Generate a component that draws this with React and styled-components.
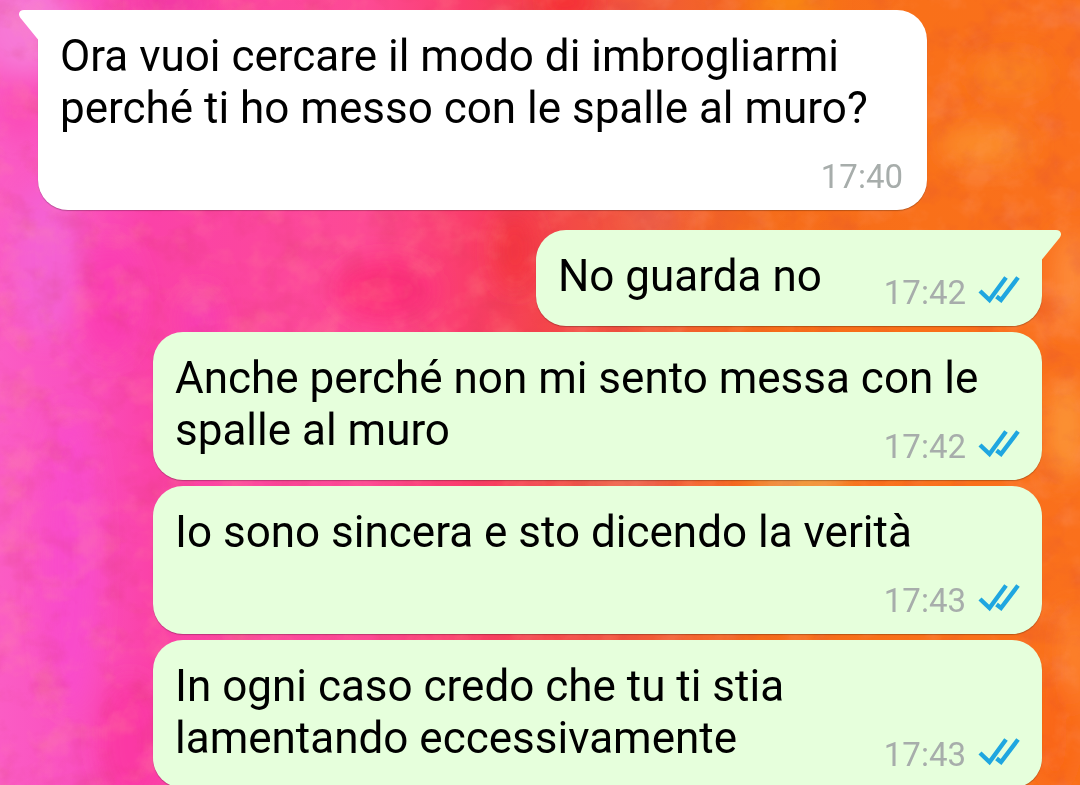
import React from 'react'
import styled, { createGlobalStyle } from 'styled-components';

const messages = [
    { id: 1, text: 'Ora vuoi cercare il modo di imbrogliarmi perché ti ho messo con le spalle al muro?', time: '17:40', tail: true },
    { id: 2, text: 'No guarda no', time: '17:42', mine: true, tail: true },
    { id: 3, text: 'Anche perché non mi sento messa con le spalle al muro', time: '17:42', mine: true },
    { id: 4, text: 'Io sono sincera e sto dicendo la verità', time: '17:43', mine: true },
    { id: 5, text: 'In ogni caso credo che tu ti stia lamentando eccessivamente', time: '17:43', mine: true },
]

const Background = () => (
    <Wallpaper viewBox="0 0 1080 785" preserveAspectRatio="none" aria-hidden="true">
        <defs>
            <linearGradient id="base" x1="0" y1="0" x2="1" y2="0">
                <stop offset="0" stopColor="#fb5cc4" />
                <stop offset="0.07" stopColor="#fa50c0" />
                <stop offset="0.14" stopColor="#fb42a8" />
                <stop offset="0.34" stopColor="#fd4a94" />
                <stop offset="0.43" stopColor="#fa3d6c" />
                <stop offset="0.5" stopColor="#f4444c" />
                <stop offset="0.6" stopColor="#f15a38" />
                <stop offset="0.7" stopColor="#f56c1a" />
                <stop offset="0.85" stopColor="#f97019" />
                <stop offset="1" stopColor="#fa701c" />
            </linearGradient>
            <filter id="blur" x="-50%" y="-50%" width="200%" height="200%">
                <feGaussianBlur stdDeviation="12" />
            </filter>
            <filter id="dark" x="0" y="0" width="100%" height="100%" colorInterpolationFilters="sRGB">
                <feTurbulence type="fractalNoise" baseFrequency="0.03 0.034" numOctaves="4" seed="4" />
                <feColorMatrix values="0 0 0 0 0.8  0 0 0 0 0.2  0 0 0 0 0.3  3 0 0 0 -1.45" />
            </filter>
            <filter id="light" x="0" y="0" width="100%" height="100%" colorInterpolationFilters="sRGB">
                <feTurbulence type="fractalNoise" baseFrequency="0.028 0.032" numOctaves="4" seed="11" />
                <feColorMatrix values="0 0 0 0 1  0 0 0 0 0.66  0 0 0 0 0.56  0 3 0 0 -1.45" />
            </filter>
        </defs>
        <rect width="1080" height="785" fill="url(#base)" />
        <g filter="url(#blur)">
            <ellipse cx="25" cy="25" rx="45" ry="50" fill="#f778d6" />
            <ellipse cx="20" cy="110" rx="24" ry="30" fill="#fb4cb8" />
            <ellipse cx="170" cy="2" rx="36" ry="12" fill="#ee35a4" />
            <ellipse cx="45" cy="260" rx="34" ry="80" fill="#f560d2" />
            <ellipse cx="110" cy="300" rx="30" ry="60" fill="#fb3cb2" />
            <ellipse cx="200" cy="320" rx="18" ry="30" fill="#f83cb4" />
            <ellipse cx="385" cy="290" rx="50" ry="30" fill="#fd2f7c" />
            <ellipse cx="515" cy="250" rx="20" ry="40" fill="#f4343f" />
            <ellipse cx="565" cy="2" rx="30" ry="16" fill="#f62c30" />
            <ellipse cx="790" cy="2" rx="40" ry="14" fill="#f98c18" />
            <ellipse cx="650" cy="220" rx="30" ry="8" fill="#ef6a58" />
            <ellipse cx="70" cy="560" rx="28" ry="150" fill="#f94bcb" />
            <ellipse cx="130" cy="740" rx="30" ry="60" fill="#fb38a4" />
            <ellipse cx="620" cy="483" rx="60" ry="12" fill="#ea6450" />
            <ellipse cx="800" cy="483" rx="50" ry="14" fill="#efa545" />
            <ellipse cx="985" cy="145" rx="46" ry="20" fill="#fb8c2a" />
            <ellipse cx="1010" cy="75" rx="40" ry="20" fill="#fa8222" />
            <ellipse cx="1072" cy="280" rx="18" ry="50" fill="#fd8b3a" />
            <ellipse cx="1066" cy="430" rx="20" ry="50" fill="#fb9336" />
            <ellipse cx="1074" cy="660" rx="12" ry="50" fill="#fd8530" />
            <ellipse cx="1055" cy="730" rx="20" ry="60" fill="#fa6614" />
        </g>
        <rect width="1080" height="785" filter="url(#dark)" opacity="0.14" />
        <rect width="1080" height="785" filter="url(#light)" opacity="0.18" />
    </Wallpaper>
)

const Tail = ({ mine }) => (
    <TailShape $mine={mine} viewBox="0 0 20 32" aria-hidden="true">
        <path d="M20 0H5C0 0 -1.500 4.500 1.500 8L19 29.500H20Z" fill="currentColor" />
    </TailShape>
)

const ReadTicks = () => (
    <Ticks viewBox="0 0 42 28" role="img" aria-label="Letto">
        <path d="M2 15L11.500 24L28 1.500" />
        <path d="M18.500 20.500L23 24L40 1.500" />
    </Ticks>
)

const Message = ({ text, time, mine, tail }) => (
    <Bubble $mine={mine} $tail={tail}>
        {tail && <Tail mine={mine} />}
        <Text>{text}</Text>
        <Meta>
            <time>{time}</time>
            {mine && <ReadTicks />}
        </Meta>
    </Bubble>
)

const App = () => {
    return (
        <>
            <GlobalStyle />
            <Background />
            <Chat>
                {messages.map(({ id, ...message }) => (
                    <Message key={id} {...message} />
                ))}
            </Chat>
        </>
    )
}

export default App;

const GlobalStyle = createGlobalStyle`
    body {
        margin: 0;
        background: #fb4a80;
        overflow: hidden;
    }
`

const Wallpaper = styled.svg`
    position: fixed;
    inset: 0;
    width: 100%;
    height: 100%;
`

const Chat = styled.main`
    position: relative;
    display: flex;
    flex-direction: column;
    gap: 6px;
    padding: 10px 38px;
    font-family: Roboto, sans-serif;
`

const Bubble = styled.article`
    position: relative;
    display: flow-root;
    box-sizing: border-box;
    max-width: calc(100% - 115px);
    align-self: ${({ $mine }) => ($mine ? 'flex-end' : 'flex-start')};
    margin-top: ${({ $mine, $tail }) => ($mine && $tail ? '14px' : '0')};
    padding: 20px ${({ $mine }) => ($mine ? '22px' : '24px')} 14px 22px;
    border-radius: 30px;
    ${({ $mine, $tail }) => $tail && ($mine ? 'border-top-right-radius: 0;' : 'border-top-left-radius: 0;')}
    background: ${({ $mine }) => ($mine ? '#e6ffdc' : '#ffffff')};
    color: ${({ $mine }) => ($mine ? '#e6ffdc' : '#ffffff')};
    box-shadow: 0 1px 1px rgba(0, 0, 0, 0.25);
    font-size: 44px;
    line-height: 52px;
`

const TailShape = styled.svg`
    position: absolute;
    top: 0;
    width: 20px;
    height: 32px;
    ${({ $mine }) => ($mine ? 'right: -19px; transform: scaleX(-1);' : 'left: -19px;')}
`

const Text = styled.span`
    color: #000000;
`

// floats beside the last line of text, or drops under it when there is no room
const Meta = styled.span`
    float: right;
    display: flex;
    align-items: flex-start;
    gap: 12px;
    margin-left: 62px;
    padding-top: 24px;
    color: #a7adab;
    font-size: 33px;
    line-height: 38px;
`

const Ticks = styled.svg`
    width: 42px;
    height: 28px;
    margin-top: 2px;
    fill: none;
    stroke: #1fa6e0;
    stroke-width: 4.4;
`
